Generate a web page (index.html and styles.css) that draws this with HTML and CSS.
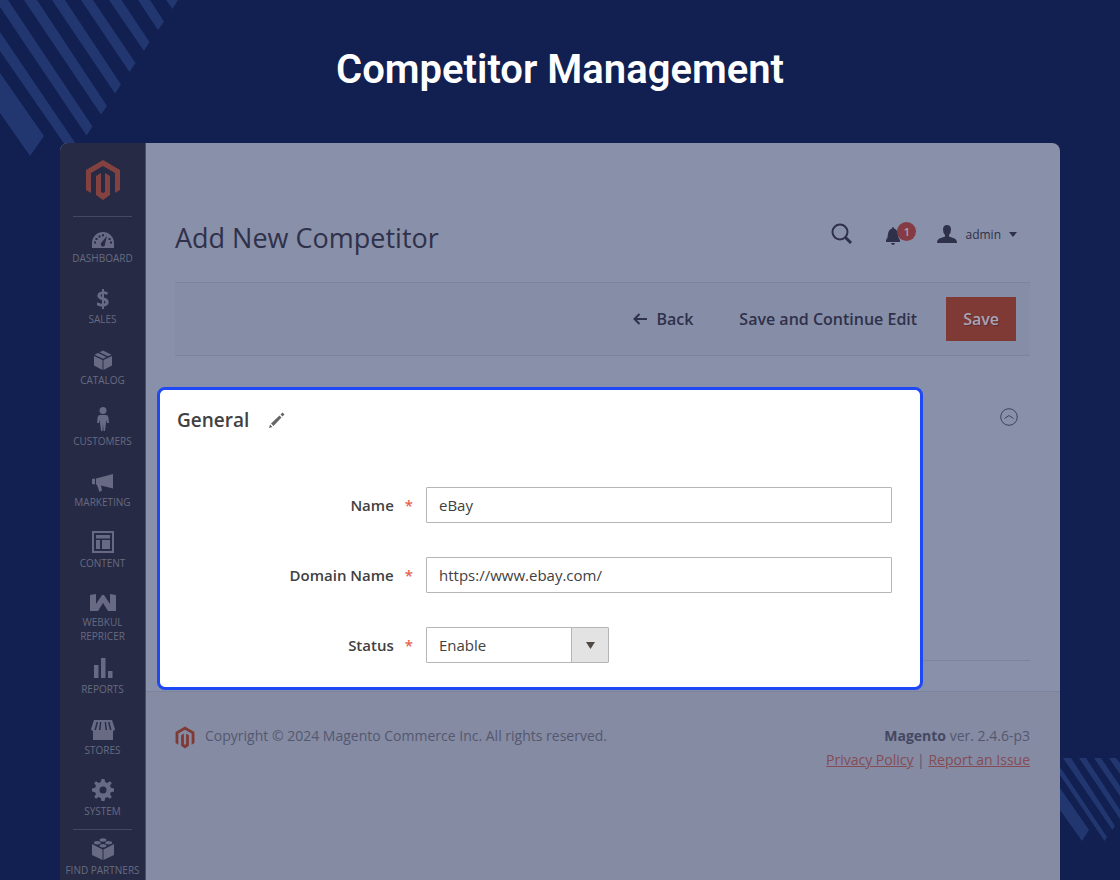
FILE: index.html
```html
<!DOCTYPE html>
<html lang="en">
<head>
    <meta charset="UTF-8">
    <meta name="viewport" content="width=device-width, initial-scale=1.0">
    <title>Competitor Management</title>
    <link rel="stylesheet" href="styles.css">
</head>
<body>
<svg class="stripes stripes-top" width="180" height="160" viewBox="0 0 180 160" aria-hidden="true">
    <path d="M0 73L44 136L30 156L0 113ZM0 32L80 150L74 158L0 51ZM0 0H8L92.5 126.5L86.5 135.5L0 7ZM24 0H37L107 106L101 114.5ZM52 0H65L121 84.5L115 93.5ZM81 0H93L135.5 63L129.5 72ZM109 0H121.5L149.5 42L144 51ZM138 0H150L164 21.5L158 30ZM166 0H178L172.5 9Z"/>
</svg>
<svg class="stripes stripes-bottom" width="60" height="84" viewBox="0 0 60 84" aria-hidden="true">
    <path d="M0 30L29 72L22 83L0 52ZM0 9L47 79L44.5 83L0 17ZM3 0H11L55 68L52.5 72ZM19 0H26L60 52V61ZM34 0H41L60 28V38ZM49 0H56L60 5V16Z"/>
</svg>

<svg class="sprite" aria-hidden="true">
    <symbol id="magento" viewBox="0 0 36 40">
        <path d="M18 0L35 10V30L30 33V13L18 6L6 13V33L1 30V10Z"/>
        <path d="M11 16L16 13V32L18 33L20 32V13L25 16V35L18 40L11 35Z"/>
    </symbol>
</svg>

<h1 class="page-title">Competitor Management</h1>

<div class="window">
    <nav class="sidebar">
        <a href="#" class="logo" aria-label="Magento"><svg width="36" height="40"><use href="#magento"/></svg></a>
        <ul class="menu">
            <li><a href="#">
                <svg width="22" height="16" viewBox="0 0 22 16"><path fill-rule="evenodd" d="M0 16V11A11 11 0 0 1 22 11V16ZM9 13A2 2 0 0 0 13 12L15 4L9.500 10.500A2 2 0 0 0 9 13ZM2 9.500V11.500H4V9.500ZM3.500 6V8H5.500V6ZM6.500 3.500V5.500H8.500V3.500ZM10 2.200V4.200H12V2.200ZM16.500 6V8H18.500V6ZM18 9.500V11.500H20V9.500Z"/></svg>
                Dashboard</a></li>
            <li><a href="#">
                <svg width="14" height="20" viewBox="0 0 14 20"><path d="M6 0H8V2.300Q10.500 2.500 12 3.500L11 6Q9.500 5.200 8 5V8.500Q13 10 12.700 13.200Q12.500 16.800 8 17.400V20H6V17.500Q3 17.400 1 16.200V13.300Q3.500 14.700 6 14.800V11.200Q1.300 9.800 1.400 6.600Q1.600 3 6 2.400ZM6 5Q3.200 6.500 6 7.900ZM8 11.800V14.700Q11 13.500 8 11.800Z"/></svg>
                Sales</a></li>
            <li><a href="#">
                <svg width="20" height="20" viewBox="0 0 20 20"><path d="M1 6L9.500 10V20L1 15.500ZM10.500 10L19 6V15.500L10.500 20ZM1.500 4.700L5 3L13.500 7L10 8.800ZM6.500 2.300L10 .5L18.500 4.700L15 6.300Z"/></svg>
                Catalog</a></li>
            <li><a href="#">
                <svg width="12" height="24" viewBox="0 0 12 24"><circle cx="6" cy="3.500" r="3.500"/><path d="M3 8H9Q11 8 11.300 10L12 16H10L9.300 13L8 24H6.500L6 17L5.500 24H4L2.700 13L2 16H0L.7 10Q1 8 3 8Z"/></svg>
                Customers</a></li>
            <li><a href="#">
                <svg width="22" height="18" viewBox="0 0 22 18"><path d="M0 5L3 4.500V10.500L0 10ZM4 4.500L21 0V14.500L9 11.500L10 16.500L7.500 18L5 11L4 10.500Z"/></svg>
                Marketing</a></li>
            <li><a href="#">
                <svg width="22" height="22" viewBox="0 0 22 22"><path fill-rule="evenodd" d="M0 0H22V22H0ZM2 2V20H20V2ZM4 4H18V7.500H4ZM4 9H8V18H4ZM10 9H18V18H10Z"/></svg>
                Content</a></li>
            <li class="two-line"><a href="#">
                <svg width="26" height="18" viewBox="0 0 26 18"><path d="M0 1L6 0V10L12 1H14L20 10V0L26 1V17H18L13 9L8 17H0Z"/></svg>
                Webkul Repricer</a></li>
            <li><a href="#">
                <svg width="20" height="22" viewBox="0 0 20 22"><path d="M1 8H5.500V21H1ZM8 1H12.500V21H8ZM15 14H19.500V21H15Z"/></svg>
                Reports</a></li>
            <li><a href="#">
                <svg width="24" height="20" viewBox="0 0 24 20"><path fill-rule="evenodd" d="M3 0H21L24 9Q23.500 11 22 11V20H2V11Q.5 11 0 9ZM5.500 2L3.500 10H5L7 2ZM9 2L8 10H9.500L10.300 2ZM13.700 2L14.500 10H16L15 2ZM17 2L19 10H20.500L18.500 2Z"/></svg>
                Stores</a></li>
            <li><a href="#">
                <svg width="22" height="22" viewBox="0 0 22 22"><path fill-rule="evenodd" d="M9.500 0H12.500L13.200 3.100L15.300 4L18 2.200L19.800 4L18 6.700L18.900 8.800L22 9.500V12.500L18.900 13.200L18 15.300L19.800 18L18 19.800L15.300 18L13.200 18.900L12.500 22H9.500L8.800 18.900L6.700 18L4 19.800L2.200 18L4 15.300L3.100 13.200L0 12.500V9.500L3.100 8.800L4 6.700L2.200 4L4 2.200L6.700 4L8.800 3.100ZM11 7.500A3.500 3.500 0 1 0 11 14.500A3.500 3.500 0 1 0 11 7.500Z"/></svg>
                System</a></li>
        </ul>
        <ul class="menu menu-partners">
            <li><a href="#">
                <svg width="22" height="22" viewBox="0 0 22 22"><path d="M0 6L10.500 11.500V22L0 17ZM11.500 11.500L22 6V17L11.500 22Z"/><ellipse cx="11" cy="2" rx="3.400" ry="1.700"/><ellipse cx="5.300" cy="4.800" rx="3.400" ry="1.700"/><ellipse cx="16.700" cy="4.800" rx="3.400" ry="1.700"/><ellipse cx="11" cy="7.800" rx="3.400" ry="1.700"/></svg>
                Find Partners</a></li>
        </ul>
    </nav>

    <div class="main">
        <div class="content">
            <header class="header">
                <h2>Add New Competitor</h2>
                <div class="header-tools">
                    <button type="button" class="icon-button" aria-label="Search">
                        <svg width="22" height="22" viewBox="0 0 22 22" fill="none" stroke="currentColor"><circle cx="9" cy="9" r="7.500" stroke-width="2"/><path d="M14.500 14.500L20 20" stroke-width="3"/></svg>
                    </button>
                    <button type="button" class="icon-button notifications" aria-label="Notifications">
                        <svg width="16" height="18" viewBox="0 0 16 18"><path d="M8 0Q9 0 9 1.500Q12.500 2.500 13 7Q13.200 11 15 13V15H1V13Q2.800 11 3 7Q3.500 2.500 7 1.500Q7 0 8 0ZM6 16H10Q9.500 18 8 18Q6.500 18 6 16Z"/></svg>
                        <span class="badge">1</span>
                    </button>
                    <button type="button" class="account">
                        <svg width="20" height="18" viewBox="0 0 20 18"><path d="M10 0Q14 0 14 4.500Q14 8 12 10V11.500L17.500 13.500Q20 14.500 20 18H0Q0 14.500 2.500 13.500L8 11.500V10Q6 8 6 4.500Q6 0 10 0Z"/></svg>
                        admin
                        <svg class="caret" width="8" height="5" viewBox="0 0 8 5"><path d="M0 0H8L4 5Z"/></svg>
                    </button>
                </div>
            </header>

            <div class="toolbar">
                <button type="button" class="button">
                    <svg width="14" height="12" viewBox="0 0 14 12" fill="none" stroke="currentColor" stroke-width="2"><path d="M14 6H1.500M6.500 1L1.500 6L6.500 11"/></svg>
                    Back
                </button>
                <button type="button" class="button">Save and Continue Edit</button>
                <button type="submit" form="competitor-form" class="button primary">Save</button>
            </div>

            <section class="fieldset">
                <form class="card" id="competitor-form">
                    <h3>General
                        <svg width="16" height="16" viewBox="0 0 16 16"><path d="M0 16L1 12.500L3.500 15ZM2 11.500L10.500 3.500L12.500 5.500L4.500 14ZM11.500 2.500L13.500 .5L15.500 2.500L13.500 4.500Z"/></svg>
                    </h3>
                    <div class="form-group">
                        <label for="name">Name <span>*</span></label>
                        <input type="text" id="name" name="name" value="eBay" required>
                    </div>
                    <div class="form-group">
                        <label for="domain">Domain Name <span>*</span></label>
                        <input type="text" id="domain" name="domain" value="https://www.ebay.com/" required>
                    </div>
                    <div class="form-group">
                        <label for="status">Status <span>*</span></label>
                        <div class="select">
                            <select id="status" name="status">
                                <option>Enable</option>
                                <option>Disable</option>
                            </select>
                            <svg width="9" height="7" viewBox="0 0 9 7" aria-hidden="true"><path d="M0 0H9L4.500 7Z"/></svg>
                        </div>
                    </div>
                </form>
                <button type="button" class="icon-button collapse" aria-label="Collapse">
                    <svg width="18" height="18" viewBox="0 0 18 18" fill="none" stroke="currentColor"><circle cx="9" cy="9" r="8.300"/><path d="M4.500 10.500L9 7.500L13.500 10.500"/></svg>
                </button>
            </section>
        </div>

        <footer class="footer">
            <p class="copyright">
                <svg width="20" height="23"><use href="#magento"/></svg>
                Copyright © 2024 Magento Commerce Inc. All rights reserved.
            </p>
            <div class="footer-info">
                <p><strong>Magento</strong> ver. 2.4.6-p3</p>
                <p><a href="#">Privacy Policy</a> | <a href="#">Report an Issue</a></p>
            </div>
        </footer>
    </div>
</div>
</body>
</html>
```
FILE: styles.css
```css
:root {
    --navy: #112050;
    --stripe: #22366f;
    --sidebar: #262a44;
    --sidebar-text: #676a82;
    --panel: #8990a9;
    --panel-dark: #848ba3;
    --line: #7c839d;
    --text: #2f314a;
    --orange: #7f3a35;
    --blue: #1f48f5;
}

* {
    box-sizing: border-box;
}

body {
    margin: 0;
    position: relative;
    height: 100vh;
    overflow: hidden;
    display: flex;
    flex-direction: column;
    background: var(--navy);
    color: var(--text);
    font-family: "Open Sans", "Noto Sans", sans-serif;
    font-size: 14px;
}

h1, h2, h3, p, ul {
    margin: 0;
    padding: 0;
}

svg {
    fill: currentColor;
    flex: none;
}

svg[fill="none"] {
    fill: none;
}

button, input, select {
    font: inherit;
    color: inherit;
}

button {
    border: none;
    background: none;
    padding: 0;
    cursor: pointer;
}

.sprite {
    display: none;
}

.stripes {
    position: absolute;
    color: var(--stripe);
}

.stripes-top {
    top: 0;
    left: 0;
}

.stripes-bottom {
    right: 0;
    bottom: 38px;
}

.page-title {
    padding: 46px 20px 49px;
    text-align: center;
    color: white;
    font: 600 40px/48px Roboto, sans-serif;
}

.window {
    position: relative;
    flex: 1;
    min-height: 0;
    display: flex;
    margin: 0 60px;
    border-radius: 8px 8px 0 0;
    overflow: hidden;
    background: var(--panel);
}

/* sidebar */
.sidebar {
    width: 86px;
    flex: none;
    padding-top: 17px;
    background: var(--sidebar);
    border-right: 1px solid #4a4f69;
    color: var(--sidebar-text);
}

.logo {
    display: flex;
    justify-content: center;
    margin: 0 13px;
    padding-bottom: 16px;
    border-bottom: 1px solid #45485f;
    color: #83423f;
}

.menu {
    display: flex;
    flex-direction: column;
    gap: 19px;
    padding-top: 6px;
    list-style: none;
}

.menu a {
    display: flex;
    flex-direction: column;
    align-items: center;
    justify-content: flex-end;
    gap: 3px;
    min-height: 42px;
    text-align: center;
    text-transform: uppercase;
    text-decoration: none;
    color: inherit;
    font-size: 10px;
    line-height: 14px;
}

.menu .two-line {
    margin: -2px 0 -8px;
    padding: 0 12px;
}

.menu .two-line a {
    min-height: 56px;
}

.menu-partners {
    position: relative;
    margin-top: 11px;
}

.menu-partners::before {
    content: "";
    position: absolute;
    top: 0;
    left: 13px;
    right: 13px;
    border-top: 1px solid #45485f;
}

/* main column */
.main {
    flex: 1;
    display: flex;
    flex-direction: column;
}

.content {
    padding: 75px 30px 30px 29px;
}

.header {
    display: flex;
    justify-content: space-between;
    padding-bottom: 24px;
}

.header h2 {
    font-size: 27px;
    font-weight: 400;
    line-height: 40px;
}

.header-tools {
    display: flex;
    align-items: center;
    height: 32px;
    padding-right: 13px;
}

.icon-button {
    display: flex;
}

.notifications {
    position: relative;
    margin: 4px 36px 0 32px;
}

.badge {
    position: absolute;
    top: -5px;
    left: 12px;
    width: 19px;
    border-radius: 50%;
    background: #853b43;
    color: #a3a3b7;
    font-size: 11px;
    font-weight: 600;
    line-height: 19px;
}

.account {
    display: flex;
    align-items: center;
    gap: 8px;
    font-size: 12px;
}

.toolbar {
    display: flex;
    justify-content: flex-end;
    align-items: center;
    gap: 12px;
    padding: 14px;
    background: #868da6;
    border: solid var(--line);
    border-width: 1px 0;
}

.button {
    display: flex;
    align-items: center;
    gap: 9px;
    height: 44px;
    padding: 0 17px;
    font-size: 16px;
    font-weight: 600;
}

.button.primary {
    background: var(--orange);
    color: #a9a3b3;
    text-shadow: 1px 1px 0 #5c2c34;
}

/* highlighted form */
.fieldset {
    display: flex;
    justify-content: space-between;
    align-items: flex-start;
    margin-top: 31px;
    border-bottom: 1px solid var(--line);
}

.card {
    position: relative;
    flex: 1;
    display: flex;
    flex-direction: column;
    gap: 34px;
    margin: 0 77px -30px -18px;
    padding: 16px 28px 24px 17px;
    background: white;
    border: 3px solid var(--blue);
    border-radius: 8px;
    color: #414141;
}

.card h3 {
    display: flex;
    align-items: center;
    gap: 20px;
    margin-bottom: 19px;
    font-size: 19px;
    font-weight: 600;
    line-height: 28px;
}

.card h3 svg {
    color: #666;
}

.form-group {
    display: grid;
    grid-template-columns: 236px 1fr;
    gap: 13px;
    align-items: center;
}

.form-group label {
    display: flex;
    justify-content: flex-end;
    gap: 11px;
    font-size: 15px;
    font-weight: 600;
}

.form-group label span {
    color: #e8604c;
}

.form-group input, .form-group select {
    width: 100%;
    height: 36px;
    padding: 0 12px;
    border: 1px solid #b5b5b5;
    border-radius: 1px;
    background: white;
    font-size: 15px;
}

.select {
    position: relative;
    width: 183px;
}

.form-group select {
    display: block;
    appearance: none;
    background: linear-gradient(to right, #b5b5b5 1px, #e3e3e3 1px) right / 37px 100% no-repeat white;
}

.select svg {
    position: absolute;
    right: 14px;
    top: 15px;
    color: #514943;
    pointer-events: none;
}

.collapse {
    margin: 21px 12px 0 0;
    color: #3f425c;
}

/* footer */
.footer {
    flex: 1;
    display: flex;
    justify-content: space-between;
    padding: 32px 30px 0 29px;
    background: var(--panel-dark);
    border-top: 1px solid var(--line);
    color: #54586f;
    line-height: 24px;
}

.copyright {
    display: flex;
    gap: 10px;
}

.copyright svg {
    margin-top: 2px;
    color: var(--orange);
}

.footer-info {
    text-align: right;
}

.footer strong {
    color: #444761;
}

.footer a {
    color: #854c56;
}
```
